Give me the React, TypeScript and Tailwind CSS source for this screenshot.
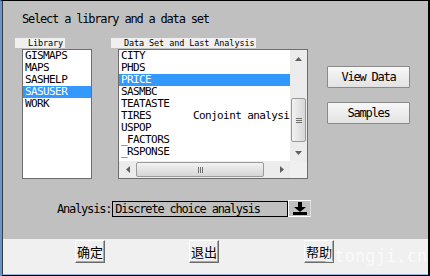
import React from 'react';

const mono = { fontFamily: '"DejaVu Sans Mono", "Liberation Mono", monospace' };
const cjk = { fontFamily: '"Noto Sans CJK SC", "Noto Sans CJK JP", sans-serif' };

const libraries = ['GISMAPS', 'MAPS', 'SASHELP', 'SASUSER', 'WORK'];

const dataSets: { name: string; note?: string }[] = [
  { name: 'CITY' },
  { name: 'PHDS' },
  { name: 'PRICE' },
  { name: 'SASMBC' },
  { name: 'TEATASTE' },
  { name: 'TIRES', note: 'Conjoint analysi' },
  { name: 'USPOP' },
  { name: '_FACTORS' },
  { name: '_RSPONSE' },
];

const Tri = ({ dir }: { dir: 'up' | 'down' | 'left' | 'right' }) => {
  const pts = {
    up: '0,4 3.5,0 7,4',
    down: '0,0 7,0 3.5,4',
    left: '4,0 4,7 0,3.5',
    right: '0,0 4,3.5 0,7',
  }[dir];
  const vertical = dir === 'up' || dir === 'down';
  return (
    <svg width={vertical ? 7 : 4} height={vertical ? 4 : 7} viewBox={vertical ? '0 0 7 4' : '0 0 4 7'}>
      <polygon points={pts} fill="#606060" />
    </svg>
  );
};

const SmallLabel = ({ text, width }: { text: string; width: string }) => (
  <div
    className={`${width} h-[10px] bg-[#f0f0f0] text-[8.5px] leading-[10px] tracking-[-0.1px] text-black pl-[13px] whitespace-nowrap`}
    style={mono}
  >
    {text}
  </div>
);

export default function App() {
  return (
    <div className="w-[430px] h-[276px] flex flex-col border-t border-t-black border-l-2 border-l-[#6d94c6] border-r-2 border-r-black bg-[#c0c0c0] relative overflow-hidden">
      <div className="flex-1 flex flex-col border-l border-l-[#3c3c3c] border-b border-b-[#9cb8dc]">
        {/* Gray dialog body */}
        <div className="h-[238px] bg-[#c0c0c0] flex flex-col" style={mono}>
          <div className="pt-[12px] pl-[19px] h-[24px] text-[12px] leading-[12px] tracking-[-1.2px] text-black whitespace-nowrap">
            Select a library and a data set
          </div>

          <div className="flex mt-[13px]">
            {/* Library */}
            <div className="ml-[12px] w-[77px] flex flex-col">
              <SmallLabel text="Library" width="w-[50px]" />
              <div className="ml-[7px] mt-[1px] w-[70px] h-[130px] bg-white border border-[#6e6e6e]">
                {libraries.map((l) => (
                  <div
                    key={l}
                    className={`h-[12px] pl-[2px] text-[11px] leading-[12px] tracking-[-0.6px] whitespace-nowrap ${
                      l === 'SASUSER' ? 'bg-[#3399ff] text-white' : 'text-black'
                    }`}
                  >
                    {l}
                  </div>
                ))}
              </div>
            </div>

            {/* Data set */}
            <div className="ml-[19px] w-[197px] flex flex-col">
              <SmallLabel text="Data Set and Last Analysis" width="w-[145px]" />
              <div className="ml-[7px] mt-[1px] w-[190px] h-[130px] bg-white border border-[#6e6e6e] flex flex-col">
                <div className="flex h-[111px]">
                  <div className="w-[171px] overflow-hidden">
                    {dataSets.map((d) => (
                      <div
                        key={d.name}
                        className={`h-[12px] pl-[2px] flex text-[11px] leading-[12px] tracking-[-0.6px] whitespace-nowrap ${
                          d.name === 'PRICE' ? 'bg-[#3399ff] text-white' : 'text-black'
                        }`}
                      >
                        <span className="w-[72px] shrink-0">{d.name}</span>
                        {d.note && <span>{d.note}</span>}
                      </div>
                    ))}
                  </div>
                  {/* vertical scrollbar */}
                  <div className="w-[17px] bg-[#ececec] flex flex-col">
                    <div className="h-[17px] flex items-center justify-center">
                      <Tri dir="up" />
                    </div>
                    <div className="h-[31px]" />
                    <div className="mx-[1px] h-[44px] rounded-[2px] border border-[#9a9a9a] bg-gradient-to-r from-[#f2f2f2] to-[#d6d6d6] flex flex-col items-center justify-center gap-[1px]">
                      <div className="w-[6px] h-[1px] bg-[#707070]" />
                      <div className="w-[6px] h-[1px] bg-[#707070]" />
                      <div className="w-[6px] h-[1px] bg-[#707070]" />
                    </div>
                    <div className="flex-1" />
                    <div className="h-[17px] flex items-center justify-center">
                      <Tri dir="down" />
                    </div>
                  </div>
                </div>
                {/* horizontal scrollbar */}
                <div className="flex h-[17px] bg-[#ececec]">
                  <div className="w-[171px] flex items-center">
                    <div className="w-[17px] flex items-center justify-center">
                      <Tri dir="left" />
                    </div>
                    <div className="w-[128px] h-[15px] rounded-[2px] border border-[#9a9a9a] bg-gradient-to-b from-[#f2f2f2] to-[#d6d6d6] flex items-center justify-center gap-[1px]">
                      <div className="w-[1px] h-[6px] bg-[#707070]" />
                      <div className="w-[1px] h-[6px] bg-[#707070]" />
                      <div className="w-[1px] h-[6px] bg-[#707070]" />
                    </div>
                    <div className="flex-1" />
                    <div className="w-[17px] flex items-center justify-center">
                      <Tri dir="right" />
                    </div>
                  </div>
                  <div className="w-[17px] bg-[#f0f0f0]" />
                </div>
              </div>
            </div>

            {/* Buttons */}
            <div className="ml-[19px] mt-[28px] flex flex-col gap-[14px]">
              {['View Data', 'Samples'].map((b) => (
                <div
                  key={b}
                  className="w-[83px] h-[22px] border border-[#8a8a8a] rounded-[1px] bg-gradient-to-b from-[#f8f8f8] to-[#e2e2e2] flex items-center justify-center text-[12px] tracking-[-1.2px] text-black whitespace-nowrap"
                >
                  {b}
                </div>
              ))}
            </div>
          </div>

          {/* Analysis */}
          <div className="flex items-center mt-[21px] ml-[54px] h-[17px]">
            <span className="text-[12px] leading-[12px] tracking-[-1.2px] text-black whitespace-nowrap">Analysis:</span>
            <div className="ml-[1px] w-[176px] h-[16px] border border-black flex items-center pl-[2px] text-[12px] leading-[12px] tracking-[-1.2px] text-black whitespace-nowrap">
              Discrete choice analysis
            </div>
            <div className="w-[23px] h-[17px] border border-white border-r-[#e0e0e0] bg-[#c0c0c0] flex items-center justify-center">
              <svg width="14" height="13" viewBox="0 0 14 13">
                <rect x="5" y="0" width="4" height="5" fill="#000" />
                <polygon points="1,5 13,5 7,10" fill="#000" />
                <rect x="0" y="10" width="14" height="3" fill="#000" />
              </svg>
            </div>
          </div>
        </div>

        {/* Bottom bar */}
        <div className="flex-1 bg-[#f0f0f0] flex items-start pt-[1px]" style={cjk}>
          {[
            { t: '确定', ml: 'ml-[72px]' },
            { t: '退出', ml: 'ml-[84px]' },
            { t: '帮助', ml: 'ml-[85px]' },
          ].map((b) => (
            <div
              key={b.t}
              className={`${b.ml} w-[30px] h-[23px] bg-[#f0f0f0] border border-t-white border-l-white border-r-[#6a6a6a] border-b-[#6a6a6a] shadow-[inset_-1px_-1px_0_#a8a8a8] flex items-center justify-center text-[13px] leading-[13px] text-black`}
            >
              {b.t}
            </div>
          ))}
        </div>
      </div>
      <div className="h-[1px] bg-black" />

      {/* watermark */}
      <div
        className="absolute left-[322px] top-[243px] text-[17px] leading-[24px] text-white/70 tracking-[0.1px] pointer-events-none"
        style={mono}
      >
        itongji.cn
      </div>
    </div>
  );
}
